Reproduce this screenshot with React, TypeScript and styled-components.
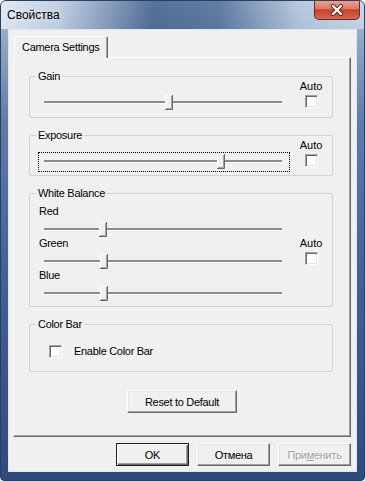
import styled, { createGlobalStyle } from "styled-components";

const GlobalStyle = createGlobalStyle`
  html, body {
    margin: 0;
    padding: 0;
    background: #ffffff;
  }
  body {
    font-family: "Liberation Sans", Arial, sans-serif;
    font-size: 11px;
    line-height: 13px;
    color: #000;
  }
`;

const Window = styled.div`
  width: 365px;
  height: 481px;
  box-sizing: border-box;
  display: flex;
  flex-direction: column;
  border: 1px solid #2c3f60;
  border-radius: 6px 6px 4px 4px;
  overflow: hidden;
  background: linear-gradient(
    180deg,
    #b4c4d8 0px,
    #90a6c4 40px,
    #5f7ca8 120px,
    #45629a 260px,
    #2f4a7c 480px
  );
`;

const TitleBar = styled.div`
  height: 28px;
  display: flex;
  justify-content: space-between;
  align-items: flex-start;
  padding-left: 6px;
  background: linear-gradient(
    90deg,
    rgba(235, 242, 250, 0.8) 0%,
    rgba(205, 218, 234, 0.6) 16%,
    rgba(35, 70, 120, 0.65) 42%,
    rgba(45, 80, 130, 0.6) 60%,
    rgba(195, 210, 230, 0.45) 82%,
    rgba(225, 234, 244, 0.55) 100%
  );
`;

const Caption = styled.span`
  font-family: "Liberation Sans", Arial, sans-serif;
  font-size: 12px;
  line-height: 28px;
  color: #000;
  text-shadow: 0 0 6px rgba(255, 255, 255, 0.9);
`;

const CloseButton = styled.div`
  width: 46px;
  height: 20px;
  margin-top: -1px;
  margin-right: 4px;
  box-sizing: border-box;
  border: 1px solid #6a2a22;
  border-top: none;
  border-radius: 0 0 5px 5px;
  background: linear-gradient(
    180deg,
    #e9a698 0%,
    #dc7a66 45%,
    #c5422d 52%,
    #d2694c 100%
  );
  display: flex;
  align-items: center;
  justify-content: center;
`;

const Frame = styled.div`
  flex: 1;
  display: flex;
  padding: 0 7px 8px 7px;
`;

const Client = styled.div`
  flex: 1;
  display: flex;
  flex-direction: column;
  background: #f0f0f0;
  border: 1px solid #dfe6ee;
  padding: 6px 5px 0 4px;
`;

const TabStrip = styled.div`
  display: flex;
  padding-left: 1px;
`;

const Tab = styled.div`
  position: relative;
  z-index: 1;
  width: 94px;
  height: 22px;
  box-sizing: border-box;
  margin-bottom: -1px;
  padding-left: 7px;
  line-height: 21px;
  letter-spacing: -0.3px;
  background: #f0f0f0;
  border-top: 1px solid #ffffff;
  border-left: 1px solid #ffffff;
  border-right: 1px solid #696969;
  border-radius: 2px 2px 0 0;
  box-shadow: inset -1px 0 0 #a0a0a0;
`;

const Panel = styled.div`
  height: 380px;
  box-sizing: border-box;
  display: flex;
  flex-direction: column;
  gap: 17px;
  padding: 18px 17px 0 15px;
  border-top: 1px solid #ffffff;
  border-left: 1px solid #ffffff;
  border-right: 1px solid #696969;
  border-bottom: 1px solid #696969;
  box-shadow: inset -1px -1px 0 #a0a0a0;
`;

const GroupBox = styled.div<{ $pad: string }>`
  position: relative;
  border: 1px solid #d0d0d0;
  border-radius: 2px;
  padding: ${(p) => p.$pad};
`;

const GroupTitle = styled.span`
  position: absolute;
  top: -7px;
  left: 6px;
  padding: 0 2px;
  line-height: 13px;
  letter-spacing: -0.3px;
  background: #f0f0f0;
`;

const Row = styled.div<{ $align?: string }>`
  display: flex;
  align-items: ${(p) => p.$align || "flex-end"};
  justify-content: space-between;
`;

const SliderStack = styled.div`
  display: flex;
  flex-direction: column;
`;

const SliderBlock = styled.div`
  display: flex;
  flex-direction: column;
  & + & {
    margin-top: -3px;
  }
`;

const SliderLabel = styled.span`
  line-height: 13px;
  margin-bottom: 2px;
  padding-left: 1px;
  letter-spacing: -0.3px;
`;

const SliderBox = styled.div<{ $focused?: boolean }>`
  position: relative;
  width: 252px;
  height: 20px;
  box-sizing: border-box;
  padding-top: 8px;
  outline: ${(p) => (p.$focused ? "1px dotted #000" : "none")};
  outline-offset: -1px;
`;

const Track = styled.div`
  height: 2px;
  margin: 0 8px 0 6px;
  background: #8c8c8c;
  box-shadow: 0 1px 0 #ffffff;
`;

const Thumb = styled.svg<{ $left: number }>`
  position: absolute;
  top: 2px;
  left: ${(p) => p.$left}px;
`;

const AutoCol = styled.div<{ $mb: number }>`
  display: flex;
  flex-direction: column;
  align-items: center;
  gap: 2px;
  width: 24px;
  line-height: 13px;
  margin-bottom: ${(p) => p.$mb}px;
`;

const Check = styled.span`
  display: block;
  width: 13px;
  height: 13px;
  box-sizing: border-box;
  background: #ffffff;
  border: 1px solid;
  border-color: #a0a0a0 #ffffff #ffffff #a0a0a0;
  box-shadow: inset 1px 1px 0 #696969, inset -1px -1px 0 #e3e3e3;
`;

const CheckRow = styled.label`
  display: flex;
  align-items: center;
  gap: 12px;
  line-height: 13px;
  letter-spacing: -0.3px;
`;

const Button = styled.button<{ $default?: boolean; $w: number }>`
  width: ${(p) => p.$w}px;
  height: 23px;
  box-sizing: border-box;
  padding: 0;
  font-family: "Liberation Sans", Arial, sans-serif;
  font-size: 11px;
  letter-spacing: -0.3px;
  color: #000;
  background: #f0f0f0;
  border: 1px solid;
  border-color: ${(p) =>
    p.$default ? "#1e1e1e" : "#ffffff #696969 #696969 #ffffff"};
  box-shadow: ${(p) =>
    p.$default
      ? "inset 1px 1px 0 #ffffff, inset -1px -1px 0 #696969, inset -2px -2px 0 #a0a0a0"
      : "inset -1px -1px 0 #a0a0a0, inset 1px 1px 0 #e3e3e3"};
  &:disabled {
    color: #a0a0a0;
    text-shadow: 1px 1px 0 #ffffff;
  }
`;

const ResetWrap = styled.div`
  display: flex;
  justify-content: center;
  margin-top: 1px;
  padding-left: 2px;
`;

const Footer = styled.div`
  display: flex;
  justify-content: flex-end;
  gap: 8px;
  margin-top: 6px;
  padding-right: 0;
`;

const Mnemonic = styled.span`
  text-decoration: underline;
`;

const SliderThumb = ({ left }: { left: number }) => (
  <Thumb $left={left} width="9" height="15" viewBox="0 0 9 15">
    <rect x="0" y="0" width="8" height="14" fill="#f0f0f0" />
    <path d="M0.5 14V0.5H7" stroke="#ffffff" fill="none" />
    <path d="M6.5 1V13.5H1" stroke="#a0a0a0" fill="none" />
    <path d="M7.5 0V14.5H0" stroke="#696969" fill="none" />
  </Thumb>
);

const Slider = ({ left, focused }: { left: number; focused?: boolean }) => (
  <SliderBox $focused={focused}>
    <Track />
    <SliderThumb left={left} />
  </SliderBox>
);

const Auto = ({ mb }: { mb: number }) => (
  <AutoCol $mb={mb}>
    <span>Auto</span>
    <Check />
  </AutoCol>
);

const App = () => {
  const balance = [
    { name: "Red", left: 61 },
    { name: "Green", left: 62 },
    { name: "Blue", left: 62 },
  ];

  return (
    <>
      <GlobalStyle />
      <Window>
        <TitleBar>
          <Caption>Свойства</Caption>
          <CloseButton>
            <svg width="14" height="12" viewBox="0 0 14 12">
              <path
                d="M3 2L11 10M11 2L3 10"
                stroke="#5a1e16"
                strokeWidth="4"
                strokeLinecap="round"
              />
              <path
                d="M3 2L11 10M11 2L3 10"
                stroke="#ffffff"
                strokeWidth="2.4"
                strokeLinecap="round"
              />
            </svg>
          </CloseButton>
        </TitleBar>
        <Frame>
          <Client>
            <TabStrip>
              <Tab>Camera Settings</Tab>
            </TabStrip>
            <Panel>
              <GroupBox $pad="3px 9px 4px 8px">
                <GroupTitle>Gain</GroupTitle>
                <Row>
                  <Slider left={127} />
                  <Auto mb={5} />
                </Row>
              </GroupBox>

              <GroupBox $pad="3px 9px 3px 8px">
                <GroupTitle>Exposure</GroupTitle>
                <Row>
                  <Slider left={179} focused />
                  <Auto mb={5} />
                </Row>
              </GroupBox>

              <GroupBox $pad="11px 9px 2px 8px">
                <GroupTitle>White Balance</GroupTitle>
                <Row $align="center">
                  <SliderStack>
                    {balance.map((b) => (
                      <SliderBlock key={b.name}>
                        <SliderLabel>{b.name}</SliderLabel>
                        <Slider left={b.left} />
                      </SliderBlock>
                    ))}
                  </SliderStack>
                  <Auto mb={8} />
                </Row>
              </GroupBox>

              <GroupBox $pad="20px 9px 13px 19px">
                <GroupTitle>Color Bar</GroupTitle>
                <CheckRow>
                  <Check />
                  Enable Color Bar
                </CheckRow>
              </GroupBox>

              <ResetWrap>
                <Button $w={110}>Reset to Default</Button>
              </ResetWrap>
            </Panel>
            <Footer>
              <Button $w={73} $default>
                OK
              </Button>
              <Button $w={73}>Отмена</Button>
              <Button $w={73} disabled>
                При<Mnemonic>м</Mnemonic>енить
              </Button>
            </Footer>
          </Client>
        </Frame>
      </Window>
    </>
  );
};

export default App;
